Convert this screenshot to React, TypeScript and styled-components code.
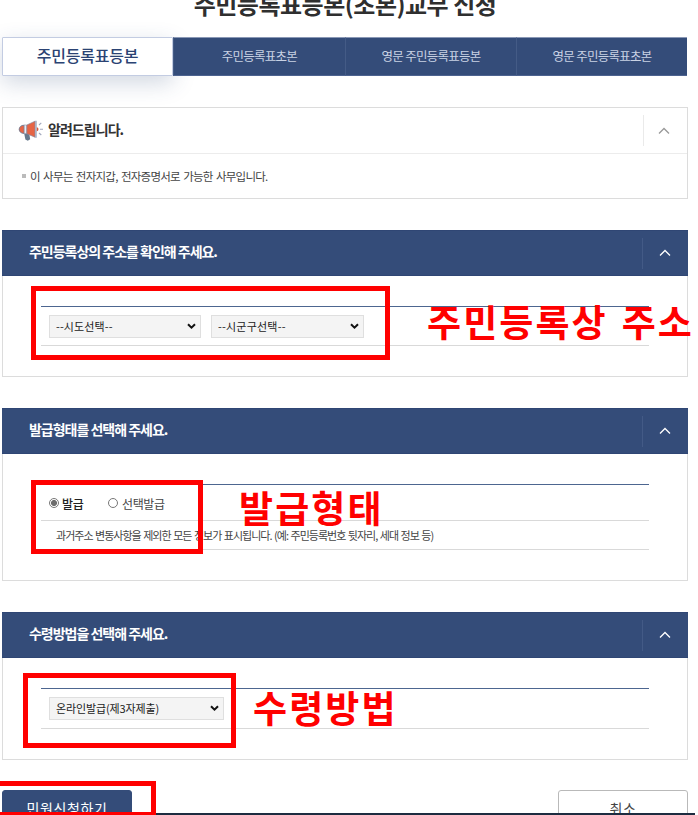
import React from "react";
import styled, { createGlobalStyle } from "styled-components";

const NAVY = "#344c79";

const GlobalStyle = createGlobalStyle`
  * { box-sizing: border-box; }
  body {
    margin: 0;
    background: #fff;
    overflow: hidden;
    font-family: "Noto Sans CJK KR", "Noto Sans", sans-serif;
    color: #333;
  }
`;

const Page = styled.main`
  position: relative;
  width: 698px;
  height: 815px;
  overflow: hidden;
  padding-left: 2px;
`;

const Content = styled.div`
  width: 686px;
  display: flex;
  flex-direction: column;
`;

const Title = styled.h1`
  margin: -14px 0 0;
  height: 51px;
  line-height: 36px;
  text-align: center;
  font-size: 24px;
  font-weight: 700;
  letter-spacing: -0.5px;
  color: #2f2f2f;
  white-space: nowrap;
`;

const Tabs = styled.nav`
  display: grid;
  grid-template-columns: 171px 172px 171px 171px;
  height: 39px;
`;

const Tab = styled.button<{ $active?: boolean }>`
  border-style: solid;
  border-width: ${(p) => (p.$active ? "1px" : "1px 0 1px 1px")};
  border-color: ${(p) => (p.$active ? "#c3cce2" : "#8a98b5 #445b86 #4d6390 #445b86")};
  border-radius: ${(p) => (p.$active ? "1px" : "0")};
  background: ${(p) => (p.$active ? "#fff" : NAVY)};
  color: ${(p) => (p.$active ? "#2b4373" : "#c9d2e4")};
  box-shadow: ${(p) => (p.$active ? "0 7px 22px rgba(52, 76, 121, 0.22)" : "none")};
  font-family: inherit;
  font-size: ${(p) => (p.$active ? "16px" : "12.5px")};
  font-weight: ${(p) => (p.$active ? 500 : 400)};
  letter-spacing: ${(p) => (p.$active ? "-0.25px" : "-0.75px")};
  line-height: 24px;
  padding: ${(p) => (p.$active ? "0 0 3px" : "0 0 2px")};
  white-space: nowrap;
`;

const Notice = styled.section`
  margin-top: 31px;
  height: 92px;
  border: 1px solid #dcdcdc;
`;

const NoticeHead = styled.header`
  display: flex;
  align-items: center;
  height: 46px;
  padding-left: 15px;
  border-bottom: 1px solid #ececec;
`;

const NoticeTitle = styled.h2`
  flex: 1;
  margin: 0 0 4px 4px;
  font-size: 14px;
  font-weight: 700;
  letter-spacing: -0.95px;
`;

const NoticeText = styled.p`
  display: flex;
  align-items: center;
  gap: 4px;
  margin: 0;
  height: 43px;
  padding-left: 19px;
  font-size: 11.5px;
  letter-spacing: -0.74px;
  word-spacing: 1.4px;
  color: #444;
  &::before {
    content: "";
    width: 4px;
    height: 4px;
    background: #bbb;
  }
`;

const Toggle = styled.span<{ $dark?: boolean }>`
  display: flex;
  align-items: center;
  justify-content: center;
  width: ${(p) => (p.$dark ? "46px" : "44px")};
  padding-right: ${(p) => (p.$dark ? "2px" : "3px")};
  height: 31px;
  border-left: 1px solid ${(p) => (p.$dark ? "#435a86" : "#eaeaea")};
`;

const Panel = styled.section<{ $top: number; $height: number }>`
  margin-top: ${(p) => p.$top}px;
  height: ${(p) => p.$height}px;
  border: 1px solid #dcdcdc;
  border-top: 0;
`;

const PanelHead = styled.header`
  display: flex;
  align-items: center;
  height: 46px;
  margin: 0 -1px;
  padding-left: 27px;
  background: ${NAVY};
  border: 1px solid #2f4674;
  border-width: 1px 0;
  color: #fff;
`;

const PanelTitle = styled.h2`
  flex: 1;
  margin: 0 0 4px;
  font-size: 14px;
  font-weight: 700;
  letter-spacing: -1.02px;
`;

const Form = styled.div`
  margin: 30px 38px 0;
  border-top: 1px solid #4d6690;
`;

const Row = styled.div<{ $height: number }>`
  display: flex;
  align-items: center;
  gap: 10px;
  height: ${(p) => p.$height}px;
  padding-left: 8px;
  border-bottom: 1px solid #d9d9d9;
`;

const SelectBox = styled.span<{ $width: number }>`
  display: flex;
  align-items: center;
  width: ${(p) => p.$width}px;
  height: 23px;
  padding-right: 4px;
  border: 1px solid #dfdfdf;
  background: #f4f4f4;
`;

const SelectInput = styled.select<{ $tracking: number }>`
  appearance: none;
  flex: 1;
  min-width: 0;
  height: 21px;
  padding: 0 0 0 6px;
  border: 0;
  background: transparent;
  color: #222;
  font: 400 11px/21px "Noto Sans CJK KR", sans-serif;
  letter-spacing: ${(p) => p.$tracking}px;
`;

const Choice = styled.label<{ $selected?: boolean }>`
  display: flex;
  align-items: center;
  gap: ${(p) => (p.$selected ? "3px" : "4px")};
  width: ${(p) => (p.$selected ? "49px" : "auto")};
  font-size: 12px;
  font-weight: ${(p) => (p.$selected ? 500 : 400)};
  letter-spacing: -0.4px;
  color: ${(p) => (p.$selected ? "#222" : "#444")};
  padding-top: 2px;
  white-space: nowrap;
`;

const Radio = styled.input`
  appearance: none;
  width: 10px;
  height: 10px;
  margin: 0 0 1px;
  border: 1px solid #777;
  border-radius: 50%;
  background: #fff;
  &:checked {
    background: radial-gradient(circle, #6d6d6d 0 2.7px, #fff 3.3px);
  }
`;

const Description = styled.span`
  padding: 0 0 1px 7px;
  font-size: 11px;
  letter-spacing: -0.98px;
  word-spacing: 1px;
  color: #444;
  white-space: nowrap;
`;

const Actions = styled.div`
  display: flex;
  justify-content: space-between;
  margin-top: 30px;
`;

const Action = styled.button<{ $primary?: boolean }>`
  width: 130px;
  height: 40px;
  padding: 0 0 4px;
  border: 1px solid ${(p) => (p.$primary ? NAVY : "#b9b9b9")};
  border-radius: 3px;
  background: ${(p) => (p.$primary ? NAVY : "#fff")};
  color: ${(p) => (p.$primary ? "#fff" : "#444")};
  font: 400 14px/20px "Noto Sans CJK KR", sans-serif;
  letter-spacing: 0.6px;
`;

const BottomEdge = styled.div`
  position: absolute;
  left: 0;
  bottom: 0;
  width: 695px;
  height: 2px;
  background: #1d2c40;
`;

const Marker = styled.div<{ $x: number; $y: number; $w: number; $h: number }>`
  position: absolute;
  left: ${(p) => p.$x}px;
  top: ${(p) => p.$y}px;
  width: ${(p) => p.$w}px;
  height: ${(p) => p.$h}px;
  border: 5px solid #f00;
`;

const MarkerLabel = styled.strong<{ $x: number; $y: number }>`
  position: absolute;
  left: ${(p) => p.$x}px;
  top: ${(p) => p.$y}px;
  color: #f00;
  font-size: 37px;
  font-weight: 700;
  line-height: 44px;
  letter-spacing: 2.1px;
  word-spacing: 3.5px;
  white-space: nowrap;
`;

function Chevron({ color }: { color: string }) {
  return (
    <svg width="12" height="8" viewBox="0 0 12 8" fill="none" stroke={color} strokeWidth="1.3">
      <path d="M1 6.5 6 1.5l5 5" />
    </svg>
  );
}

function Megaphone() {
  return (
    <svg width="26" height="24" viewBox="0 0 26 24">
      <path d="M6 13.5h5l1.2 6.8-2.4 1.5-2.4-1.3z" fill="#66788c" />
      <path d="M6.3 6.2C3 6.2 1.2 8 1.2 10.3s1.8 4.2 5.1 4.2z" fill="#e66445" stroke="#6f7890" strokeWidth=".9" />
      <path d="M6.2 6h2.6v8.7H6.2z" fill="#e8ecf5" stroke="#8790a5" strokeWidth=".6" />
      <path d="M8.8 6 17 2.2v16l-8.2-3.5z" fill="#e66445" stroke="#8b8799" strokeWidth=".7" />
      <path d="M17 1.8h1.8v17H17z" fill="#a9b2c6" />
      <path d="M18.8 8.3c2.2.2 2.2 3.7 0 4z" fill="#d7593e" />
      <path d="m21 6 2.3-2.2M22 10.2h3M21 14l2.3 2" stroke="#a2a8bd" strokeWidth="1.1" />
    </svg>
  );
}

function Select({ label, width, tracking = 0 }: { label: string; width: number; tracking?: number }) {
  return (
    <SelectBox $width={width}>
      <SelectInput $tracking={tracking} aria-label={label}>
        <option>{label}</option>
      </SelectInput>
      <svg width="9" height="7" viewBox="0 0 9 7" fill="none" stroke="#111" strokeWidth="2">
        <path d="m1 1.2 3.5 3.5L8 1.2" />
      </svg>
    </SelectBox>
  );
}

interface StepProps {
  title: string;
  top: number;
  height: number;
  children: React.ReactNode;
}

function Step({ title, top, height, children }: StepProps) {
  return (
    <Panel $top={top} $height={height}>
      <PanelHead>
        <PanelTitle>{title}</PanelTitle>
        <Toggle $dark>
          <Chevron color="#fff" />
        </Toggle>
      </PanelHead>
      <Form>{children}</Form>
    </Panel>
  );
}

export default function App() {
  return (
    <>
      <GlobalStyle />
      <Page>
        <Content>
          <Title>주민등록표등본(초본)교부 신청</Title>
          <Tabs>
            <Tab $active>주민등록표등본</Tab>
            <Tab>주민등록표초본</Tab>
            <Tab>영문 주민등록표등본</Tab>
            <Tab>영문 주민등록표초본</Tab>
          </Tabs>
          <Notice>
            <NoticeHead>
              <Megaphone />
              <NoticeTitle>알려드립니다.</NoticeTitle>
              <Toggle>
                <Chevron color="#999" />
              </Toggle>
            </NoticeHead>
            <NoticeText>이 사무는 전자지갑, 전자증명서로 가능한 사무입니다.</NoticeText>
          </Notice>
          <Step title="주민등록상의 주소를 확인해 주세요." top={31} height={147}>
            <Row $height={39}>
              <Select label="--시도선택--" width={152} tracking={0.1} />
              <Select label="--시군구선택--" width={153} tracking={0.2} />
            </Row>
          </Step>
          <Step title="발급형태를 선택해 주세요." top={31} height={173}>
            <Row $height={36}>
              <Choice $selected>
                <Radio type="radio" name="issue" defaultChecked />
                발급
              </Choice>
              <Choice>
                <Radio type="radio" name="issue" />
                선택발급
              </Choice>
            </Row>
            <Row $height={29}>
              <Description>
                과거주소 변동사항을 제외한 모든 정보가 표시됩니다. (예: 주민등록번호 뒷자리, 세대 정보 등)
              </Description>
            </Row>
          </Step>
          <Step title="수령방법을 선택해 주세요." top={31} height={148}>
            <Row $height={40}>
              <Select label="온라인발급(제3자제출)" width={175} tracking={-0.12} />
            </Row>
          </Step>
          <Actions>
            <Action $primary>민원신청하기</Action>
            <Action>취소</Action>
          </Actions>
        </Content>
        <BottomEdge />
        <Marker $x={31} $y={286} $w={359} $h={74} />
        <Marker $x={31} $y={480} $w={172} $h={74} />
        <Marker $x={23} $y={673} $w={213} $h={75} />
        <Marker $x={-5} $y={781} $w={161} $h={36} />
        <MarkerLabel $x={427} $y={299}>주민등록상 주소</MarkerLabel>
        <MarkerLabel $x={239} $y={485}>발급형태</MarkerLabel>
        <MarkerLabel $x={253} $y={685}>수령방법</MarkerLabel>
      </Page>
    </>
  );
}
